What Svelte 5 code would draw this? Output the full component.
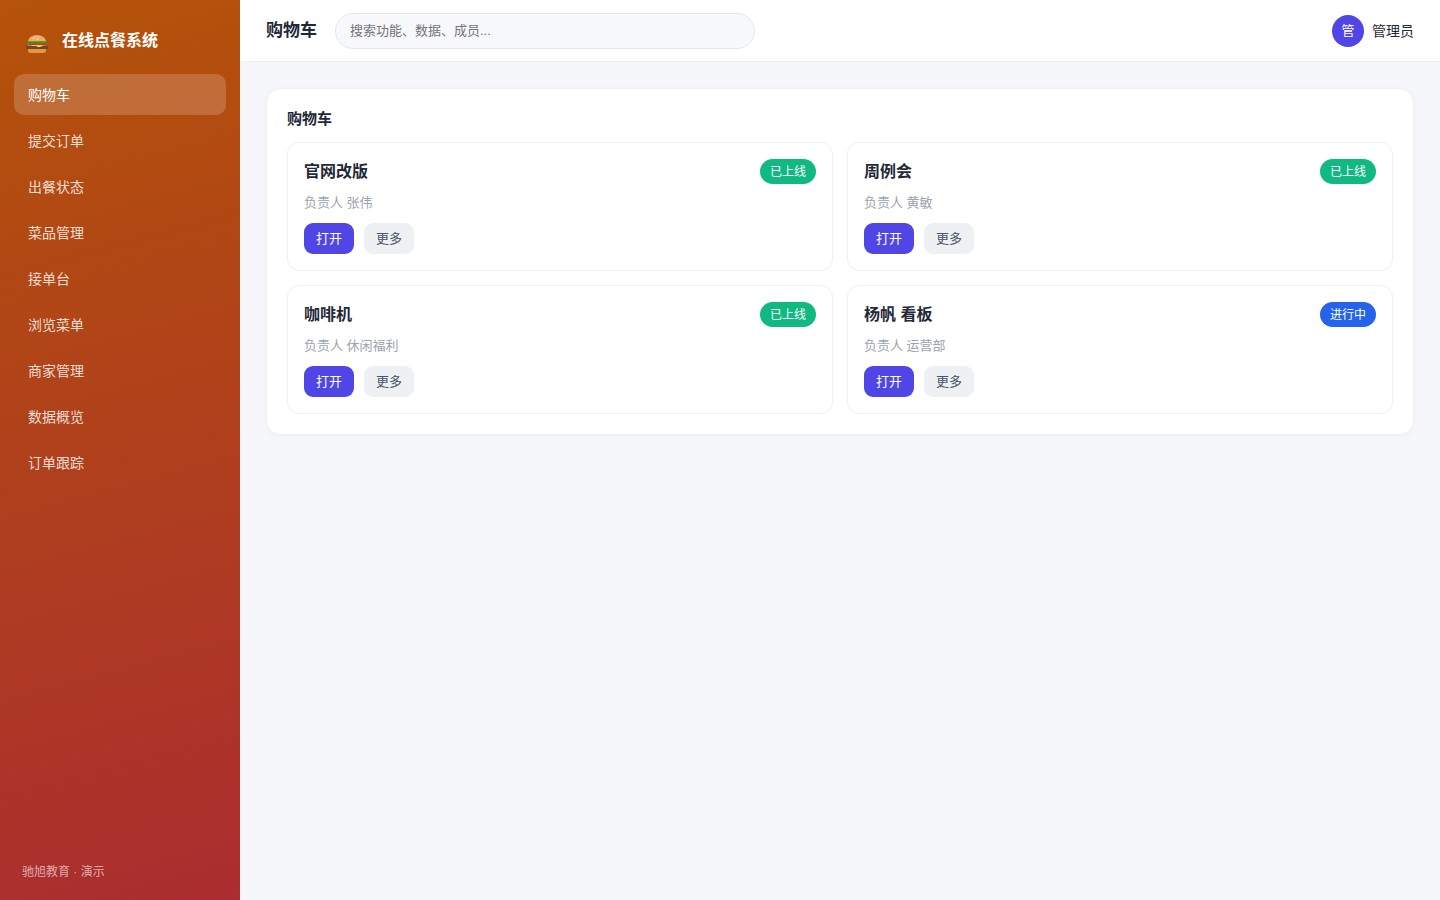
<!--
    Cart page of the ordering system admin:
    sidebar navigation, top bar with search, and a panel of item cards.
-->
<script lang="ts">
    type Item = {
        title: string;
        owner: string;
        status: string;
        tone: 'green' | 'blue';
    };

    const menu = [
        '购物车',
        '提交订单',
        '出餐状态',
        '菜品管理',
        '接单台',
        '浏览菜单',
        '商家管理',
        '数据概览',
        '订单跟踪',
    ];

    const items: Item[] = [
        { title: '官网改版', owner: '张伟', status: '已上线', tone: 'green' },
        { title: '周例会', owner: '黄敏', status: '已上线', tone: 'green' },
        { title: '咖啡机', owner: '休闲福利', status: '已上线', tone: 'green' },
        { title: '杨帆 看板', owner: '运营部', status: '进行中', tone: 'blue' },
    ];

    let current = $state('购物车');
    let keyword = $state('');

    function select(event: MouseEvent, name: string) {
        event.preventDefault();
        current = name;
    }
</script>

<div class="layout">
    <aside class="sidebar">
        <div class="brand">
            <svg class="brand-logo" viewBox="0 0 22 18" aria-hidden="true">
                <path d="M2 7C2 3 6 0 11 0s9 3 9 7z" fill="#f4a962" />
                <path d="M2 14h18v1.500c0 1.700-1 2.500-3 2.500H5c-2 0-3-.8-3-2.500z" fill="#e8963e" />
                <path d="M2 9h18v2H2z" fill="#c9782f" />
                <rect x="0" y="11" width="22" height="3" rx="1" fill="#6d4634" />
                <path d="M3 8h17v1.500l-2 .7H5l-2-.7z" fill="#f01e2c" />
                <path d="M5 10h13l-2 1-2 1h-2l-2-1H6z" fill="#ffd93b" />
                <path d="M2 6.200h18L22 7v1.400h-3l-2 .6-3-.6-3 .3-3-.3-3 .6-2-.6H0V7z" fill="#3f941c" />
                <g fill="#fff3d6">
                    <rect x="7" y="3" width="1" height="1" />
                    <rect x="9" y="2" width="1" height="1" />
                    <rect x="12" y="2" width="1" height="1" />
                    <rect x="11" y="4" width="1" height="1" />
                </g>
            </svg>
            <span>在线点餐系统</span>
        </div>
        <nav class="menu">
            {#each menu as name}
                <a
                    href="#{name}"
                    class="menu-link"
                    class:menu-link-active={name === current}
                    onclick={(event) => select(event, name)}>{name}</a>
            {/each}
        </nav>
        <div class="sidebar-foot">驰旭教育 · 演示</div>
    </aside>

    <div class="main">
        <header class="topbar">
            <h1>{current}</h1>
            <input
                class="search"
                type="search"
                aria-label="搜索"
                placeholder="搜索功能、数据、成员..."
                bind:value={keyword} />
            <div class="user">
                <span class="avatar">管</span>
                <span>管理员</span>
            </div>
        </header>

        <main class="content">
            <section class="panel">
                <h2>{current}</h2>
                <div class="grid">
                    {#each items as item}
                        <article class="card">
                            <div class="card-head">
                                <h3>{item.title}</h3>
                                <span class="badge badge-{item.tone}">{item.status}</span>
                            </div>
                            <p class="owner">负责人 {item.owner}</p>
                            <div class="actions">
                                <button type="button" class="btn btn-primary">打开</button>
                                <button type="button" class="btn">更多</button>
                            </div>
                        </article>
                    {/each}
                </div>
            </section>
        </main>
    </div>
</div>

<style>
    :global(body) {
        margin: 0;
        background: #f5f7fb;
        color: #1f2937;
        font-family: "Liberation Sans", "Noto Sans CJK SC", sans-serif;
        font-size: 14px;
        line-height: 22px;
    }

    .layout {
        display: flex;
        min-height: 100vh;
    }

    .layout,
    .layout * {
        box-sizing: border-box;
    }

    h1,
    h2,
    h3,
    p {
        margin: 0;
    }

    .sidebar {
        display: flex;
        flex-direction: column;
        flex: none;
        width: 240px;
        padding: 20px 14px;
        background: linear-gradient(165deg, #b45309, #ab2d30);
        color: #fff;
    }

    .brand {
        display: flex;
        align-items: center;
        gap: 14px;
        height: 40px;
        margin-bottom: 14px;
        padding: 2px 12px 0;
        font-size: 16px;
        font-weight: 700;
    }

    .brand-logo {
        width: 22px;
        height: 18px;
        margin-top: 6px;
    }

    .menu {
        display: flex;
        flex-direction: column;
        gap: 5px;
    }

    .menu-link {
        padding: 10px 14px 8px;
        border-radius: 10px;
        color: rgba(255, 255, 255, 0.82);
        line-height: 23px;
        text-decoration: none;
    }

    .menu-link-active {
        background: rgba(255, 255, 255, 0.18);
        color: #fff;
    }

    .sidebar-foot {
        margin-top: auto;
        padding: 0 8px;
        color: rgba(255, 255, 255, 0.6);
        font-size: 12px;
        line-height: 16px;
    }

    .main {
        flex: 1;
        min-width: 0;
    }

    .topbar {
        display: flex;
        align-items: center;
        gap: 18px;
        height: 62px;
        padding: 0 26px;
        border-bottom: 1px solid #eceef3;
        background: #fff;
    }

    .topbar h1 {
        font-size: 17px;
        line-height: 25px;
    }

    .search {
        flex: 0 1 420px;
        min-width: 0;
        height: 36px;
        padding: 0 14px;
        border: 1px solid #e4e7ef;
        border-radius: 18px;
        appearance: none;
        background: #f7f8fc;
        color: inherit;
        font: inherit;
        font-size: 13px;
    }

    .search::placeholder {
        color: #757575;
    }

    .user {
        display: flex;
        align-items: center;
        gap: 8px;
        margin-left: auto;
    }

    .avatar {
        width: 32px;
        height: 32px;
        border-radius: 50%;
        background: #4f46e5;
        color: #fff;
        font-size: 13px;
        line-height: 32px;
        text-align: center;
    }

    .content {
        padding: 26px;
    }

    .panel {
        padding: 20px;
        border: 1px solid #eef0f4;
        border-radius: 14px;
        background: #fff;
        box-shadow: 0 1px 4px rgba(30, 41, 90, 0.04);
    }

    .panel h2 {
        margin-bottom: 13px;
        font-size: 15px;
        line-height: 20px;
    }

    .grid {
        display: grid;
        grid-template-columns: repeat(2, 1fr);
        gap: 14px;
    }

    .card {
        padding: 16px;
        border: 1px solid #eef0f3;
        border-radius: 12px;
    }

    .card-head {
        display: flex;
        align-items: center;
        justify-content: space-between;
    }

    .card h3 {
        font-size: 16px;
        line-height: 25px;
    }

    .badge {
        padding: 1px 10px 0;
        border-radius: 13px;
        color: #fff;
        font-size: 12px;
        line-height: 24px;
    }

    .badge-green {
        background: #10b981;
    }

    .badge-blue {
        background: #2563eb;
    }

    .owner {
        margin: 8px 0 9px;
        color: #9ca3af;
        font-size: 13px;
    }

    .actions {
        display: flex;
        gap: 10px;
    }

    .btn {
        height: 31px;
        padding: 0 12px;
        border: 0;
        border-radius: 9px;
        background: #eef0f4;
        color: #475569;
        font: inherit;
        font-size: 13px;
        cursor: pointer;
    }

    .btn-primary {
        background: #4f46e5;
        color: #fff;
    }
</style>
